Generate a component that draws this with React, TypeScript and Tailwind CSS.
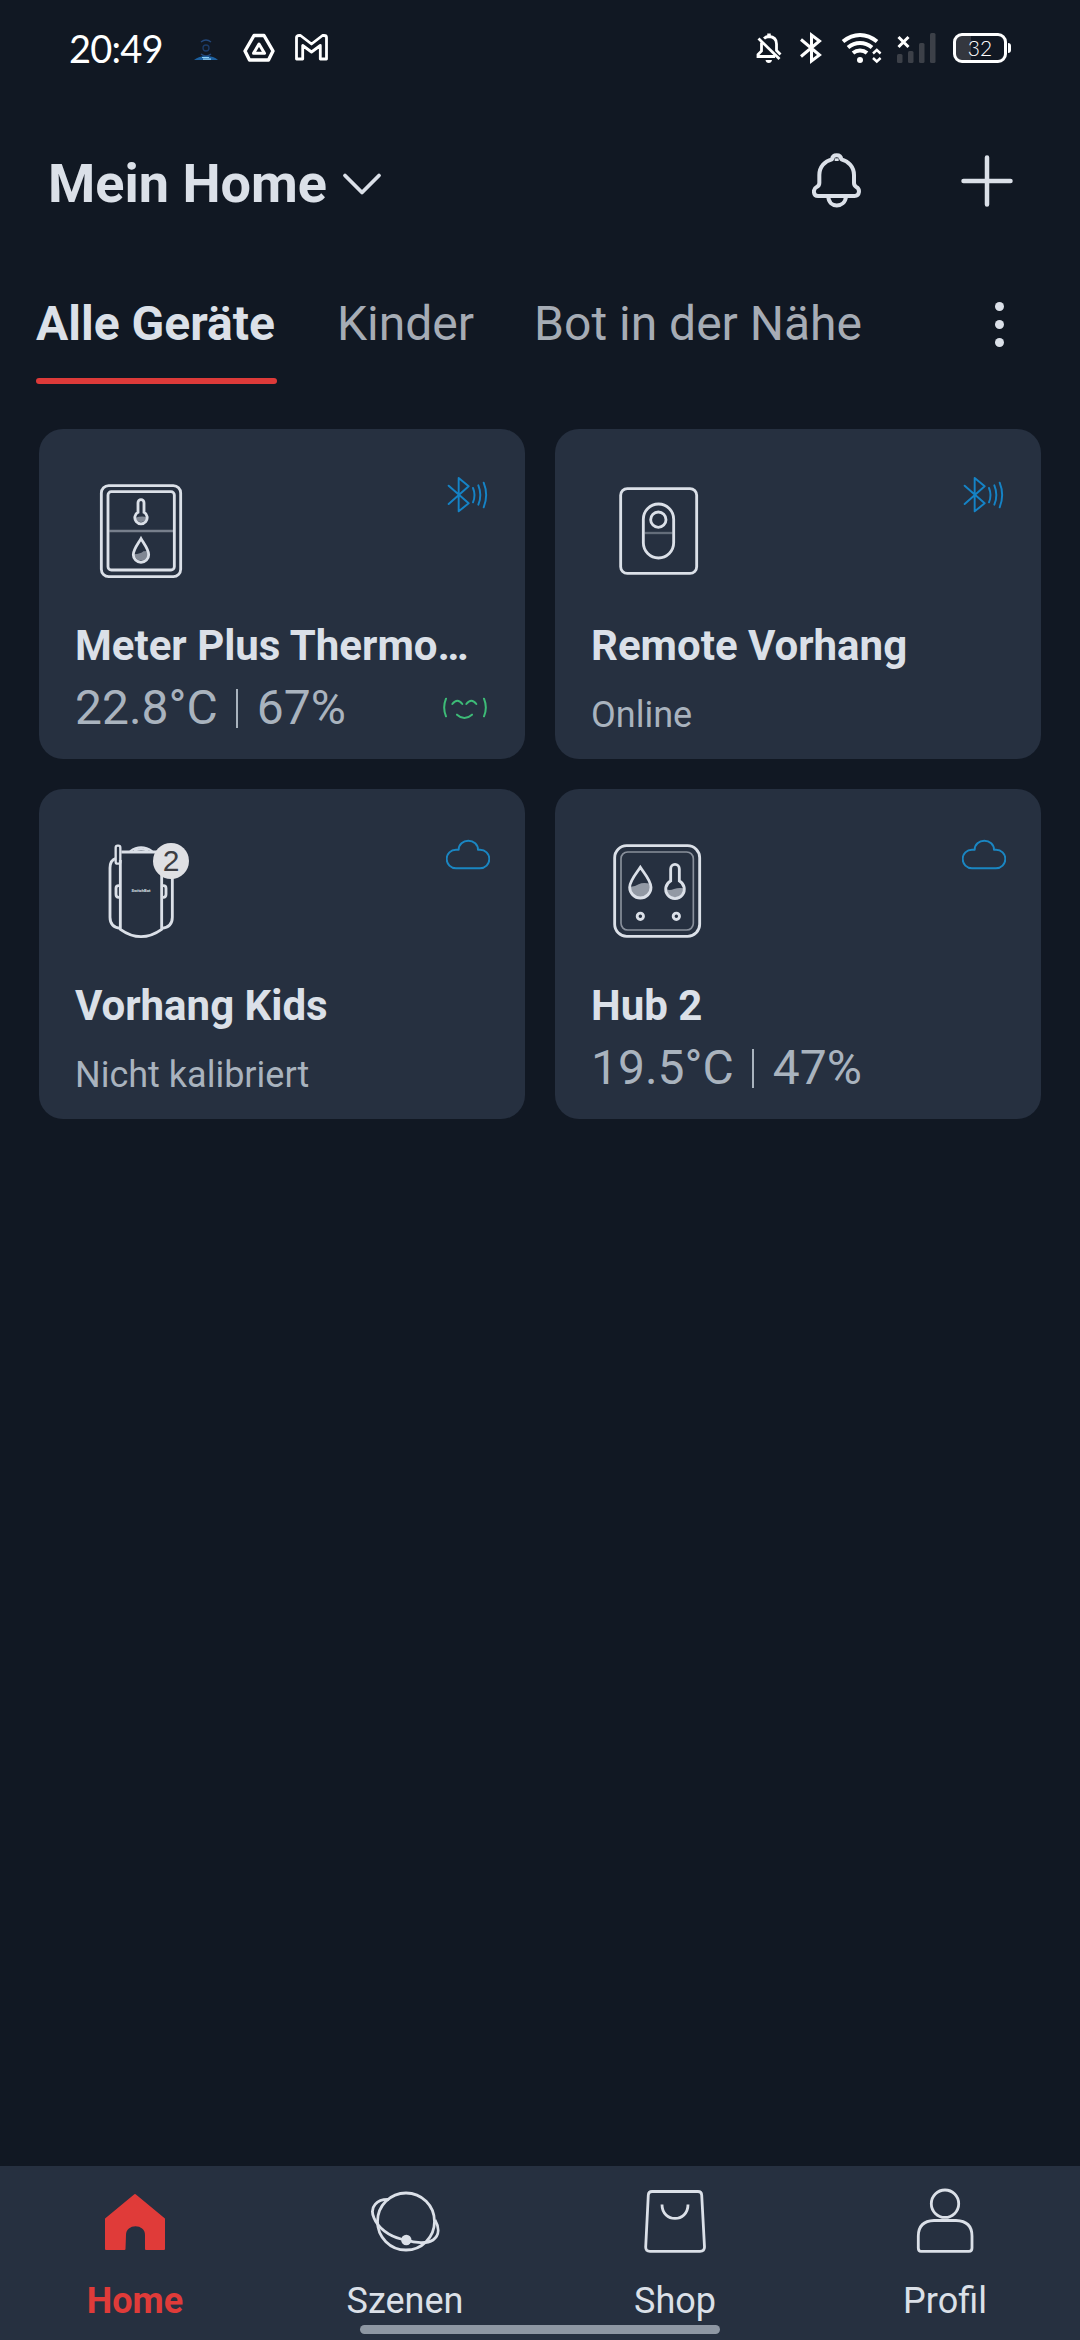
import type { ReactNode } from "react";

type DeviceCardProps = {
  title: string;
  icon: ReactNode;
  connection: ReactNode;
  status?: string;
  reading?: { temperature: string; humidity: string };
  comfort?: boolean;
};

const StatusBar = () => (
  <div className="flex h-24 items-center justify-between pl-[69px] pr-[69px] text-white">
    <div className="flex items-center">
      <span className="w-[124px] font-['Lato',sans-serif] text-[38px] leading-none tracking-[-0.8px]">
        20:49
      </span>
      <svg width="26" height="32" viewBox="0 0 26 32" fill="none" className="mr-6">
        <path d="M8 10 Q13 6 18 10 M8 22 Q13 26 18 22" stroke="#23477a" strokeWidth="1.4" />
        <circle cx="13" cy="16" r="3" stroke="#1c3b68" strokeWidth="1.3" />
        <path d="M1 28 Q6 24 13 24 Q21 24 25 28 Z" fill="#1c5f9e" />
        <path d="M9 25.5 h7 M10 27.2 h8" stroke="#8fd0f5" strokeWidth="1.2" />
      </svg>
      <svg width="32" height="30" viewBox="0 0 32 30" fill="none" stroke="currentColor" strokeLinejoin="round">
        <path d="M11 2.5 H21 L30 18 L25.500 27 H6.500 L2 18 Z" strokeWidth="3.400" />
        <path d="M16 11 L21.500 20.300 H10.500 Z" strokeWidth="3" />
      </svg>
      <svg width="33" height="30" viewBox="0 0 33 30" fill="none" stroke="currentColor" strokeLinejoin="round" className="ml-[20px]">
        <path
          d="M1.500 4.500 Q1.500 2.500 4 2.500 H5.500 L16.500 11 L27.500 2.500 H29 Q31.500 2.500 31.500 4.500 V26 H25.300 V12.500 L16.500 19 L7.700 12.500 V26 H1.500 Z"
          strokeWidth="2.800"
        />
      </svg>
    </div>

    <div className="flex items-center">
      <svg width="26" height="32" viewBox="0 0 26 32" fill="none" stroke="currentColor" strokeWidth="2.800">
        <path d="M5.500 10.500 V19 L2 22.500 V24.500 H19" />
        <path d="M8 6.500 Q10 4.500 13 4.500 Q20.500 5 20.500 12 V18.500 L24.500 22.500" />
        <path d="M13 1.500 V5" strokeWidth="3.500" />
        <path d="M2.500 6.500 L23.500 27" />
        <path d="M9.500 28 H16 Q15.500 31 12.800 31 Q10 31 9.500 28 Z" fill="currentColor" stroke="none" />
      </svg>
      <svg width="24" height="32" viewBox="0 0 24 32" fill="none" stroke="currentColor" strokeWidth="3" className="ml-[17px]">
        <path d="M2 7.500 L20.500 23 L12.500 29 V3 L20.500 9 L2 24.500" />
      </svg>
      <svg width="42" height="32" viewBox="0 0 42 32" fill="none" stroke="currentColor" strokeWidth="4" className="ml-[18px]">
        <path d="M2 9.500 Q10 3 19 3 Q28 3 36 9.500" />
        <path d="M7 15.500 Q12.500 11 19 11 Q25.500 11 31 15.500" />
        <path d="M12 21 Q15 18.500 19 18.500 Q23 18.500 26 21" />
        <circle cx="19" cy="28" r="3" fill="currentColor" stroke="none" />
        <path d="M32 21.500 L35.800 18 L39.600 21.500 M32 26 L35.800 29.500 L39.600 26" strokeWidth="2.400" />
      </svg>
      <svg width="40" height="32" viewBox="0 0 40 32" className="ml-[14px]">
        <g fill="#3c4048">
          <rect x="0" y="22" width="5.500" height="9" rx="1.500" />
          <rect x="11" y="19" width="5.500" height="12" rx="1.500" />
          <rect x="22" y="11" width="5.500" height="20" rx="1.500" />
          <rect x="33" y="1" width="5.500" height="30" rx="1.500" />
        </g>
        <path d="M1.500 5 L11.500 15 M11.500 5 L1.500 15" stroke="currentColor" strokeWidth="3" />
      </svg>
      <div className="ml-4 flex h-[30px] w-[54px] items-center justify-center rounded-[9px] border-3 border-white bg-gradient-to-r from-[#34373f] from-32% to-transparent to-32% pb-0.5 font-['Lato',sans-serif] text-[21px] font-light leading-none">
        32
      </div>
      <div className="ml-px h-[10px] w-[3px] rounded-r bg-white" />
    </div>
  </div>
);

const Header = () => (
  <header className="flex h-[170px] items-center justify-between pl-12 pr-[67px]">
    <div className="flex items-center gap-[15px] pt-1.5">
      <h1 className="text-[54px] font-bold leading-none">Mein Home</h1>
      <svg width="40" height="24" viewBox="0 0 40 24" fill="none" stroke="currentColor" strokeWidth="3.800" strokeLinecap="round" strokeLinejoin="round">
        <path d="M3 3.500 L20 20.500 L37 3.500" />
      </svg>
    </div>
    <div className="flex items-center gap-[100px]">
      <svg width="49" height="55" viewBox="0 0 147 165" fill="none" stroke="currentColor" strokeWidth="12" strokeLinejoin="round" className="mb-0.5">
        <path d="M18 129 C3 129 2 108 14 102 C20 99 22 96 22 90 V66 C22 42 38 24 60 19 C62 3 86 3 88 19 C109 24 126 42 126 66 V90 C126 96 128 99 133 102 C145 108 143 129 128 129 Z" />
        <path d="M74 16 V24" />
        <path d="M49 131 C50 166 98 166 102 131" />
      </svg>
      <svg width="52" height="52" viewBox="0 0 52 52" stroke="currentColor" strokeWidth="4.500" strokeLinecap="round">
        <path d="M26 2.500 V49.500 M2.500 26 H49.500" />
      </svg>
    </div>
  </header>
);

const Tabs = () => (
  <nav className="mt-2.5 flex h-[108px] items-start pl-9 text-5xl leading-[96px]">
    <div className="relative h-full w-[241px] whitespace-nowrap font-bold">
      Alle Geräte
      <span className="absolute inset-x-0 bottom-0 h-1.5 rounded-full bg-[#dd3a39]" />
    </div>
    <span className="ml-[60px] text-[#a6acb5]">Kinder</span>
    <span className="ml-[60px] text-[#a6acb5]">Bot in der Nähe</span>
    <span className="ml-auto mr-[76px] flex h-24 flex-col items-center justify-center gap-[9px]">
      <i className="size-[9px] rounded-full bg-[#dbe0e8]" />
      <i className="size-[9px] rounded-full bg-[#dbe0e8]" />
      <i className="size-[9px] rounded-full bg-[#dbe0e8]" />
    </span>
  </nav>
);

const MeterIcon = () => (
  <svg width="102" height="102" viewBox="0 0 306 306" fill="none" stroke="currentColor" strokeWidth="8.500">
    <rect x="34" y="17" width="238" height="273" rx="22" />
    <rect x="54" y="35" width="199" height="235" rx="10" />
    <path d="M58 153 H249" strokeWidth="7" opacity="0.450" />
    <path d="M136 113 Q153 107 171 111 A18 18 0 0 1 136 113 Z" fill="currentColor" stroke="none" opacity="0.500" />
    <path d="M144 97 V68 A9 9 0 0 1 162 68 V97 A18.500 18.500 0 1 1 144 97 Z" />
    <path d="M131 223 Q153 222 160 214 L176 213 A23 25 0 0 1 131 223 Z" fill="currentColor" stroke="none" opacity="0.500" />
    <path d="M153 176 C145 190 130 208 130 224 A23 23 0 0 0 176 224 C176 208 161 190 153 176 Z" />
  </svg>
);

const RemoteIcon = () => (
  <svg width="102" height="102" viewBox="0 0 306 306" fill="none" stroke="currentColor" strokeWidth="8.500">
    <rect x="44" y="26" width="228" height="254" rx="20" />
    <rect x="112" y="72" width="91" height="162" rx="45.500" />
    <circle cx="157" cy="119" r="23" />
    <path d="M116 159 H199" strokeWidth="7" opacity="0.350" />
  </svg>
);

const CurtainIcon = () => (
  <div className="relative">
    <svg width="102" height="102" viewBox="0 0 306 306" fill="none" stroke="currentColor" strokeWidth="8.500" strokeLinejoin="round">
      <path d="M91 60 V268 Q153 312 215 268 V36 H94" />
      <path d="M78 55 Q60 60 60 84 V232 Q60 262 91 265" />
      <path d="M215 265 Q247 262 247 232 V84" />
      <path d="M120 34 Q153 10 187 34 M132 33 Q153 22 175 33" strokeWidth="6" />
      <rect x="77" y="17" width="14" height="54" rx="6" strokeWidth="7" />
      <path d="M91 137 H86 Q78 137 78 145 V163 Q78 172 86 172 H91 M215 137 H220 Q228 137 228 145 V163 Q228 172 220 172 H215" />
      <text x="153" y="156" textAnchor="middle" fill="currentColor" stroke="none" fontSize="12.500" fontWeight="700">
        SwitchBot
      </text>
    </svg>
    <span className="absolute left-[63px] top-[3px] flex size-9 items-center justify-center rounded-full bg-[#dfe0e4] font-['Liberation_Sans',sans-serif] text-[30px] leading-none text-[#3c3d43]">
      2
    </span>
  </div>
);

const HubIcon = () => (
  <svg width="102" height="102" viewBox="0 0 306 306" fill="none" stroke="currentColor" strokeWidth="8.500">
    <rect x="26" y="17" width="255" height="272" rx="36" />
    <rect x="45" y="36" width="217" height="234" rx="20" strokeWidth="5" opacity="0.550" />
    <path d="M72 140 Q86 141 98 133 Q112 126 134 132 V142 A31 31 0 0 1 72 142 Z" fill="currentColor" stroke="none" opacity="0.600" />
    <path d="M103 82 C92 99 71 122 71 142 A32 32 0 0 0 135 142 C135 122 114 99 103 82 Z" />
    <path d="M180 148 Q192 152 204 147 Q218 142 234 145 A27 27 0 0 1 180 148 Z" fill="currentColor" stroke="none" opacity="0.600" />
    <path d="M194 123 V87 A13 14 0 0 1 220 87 V123 A28 28 0 1 1 194 123 Z" />
    <circle cx="103" cy="229" r="9.500" />
    <circle cx="211" cy="229" r="9.500" />
  </svg>
);

const BluetoothSignal = () => (
  <svg width="44" height="40" viewBox="0 0 132 120" fill="none" stroke="#1583c6" strokeWidth="5.800" strokeLinecap="round" strokeLinejoin="round">
    <path d="M8 32 L68 85 L38 109 V9 L68 34 L8 87" />
    <path d="M81 39 Q90 60 81 82 M97 31 Q109 60 97 89 M113 23 Q128 60 113 97" />
  </svg>
);

const Cloud = () => (
  <svg width="44" height="40" viewBox="0 0 132 120" fill="none" stroke="#1a86c2" strokeWidth="5.800" strokeLinejoin="round">
    <path d="M30 100 A28 28 0 0 1 30 44 L38 44 A29 27 0 0 1 96 44 L102 44 A28 28 0 0 1 102 100 Z" />
  </svg>
);

const ComfortFace = () => (
  <svg width="46" height="24" viewBox="0 0 138 72" fill="none" stroke="#3dbb77" strokeWidth="6" strokeLinecap="round">
    <path d="M12 8 Q1 35 12 61 M126 8 Q137 35 126 61" />
    <path d="M31 24 Q46 4 61 24 M73 24 Q88 4 103 24" />
    <path d="M45 56 Q67 76 90 56" />
  </svg>
);

const DeviceCard = ({ title, icon, connection, status, reading, comfort }: DeviceCardProps) => (
  <article className="h-[330px] rounded-3xl bg-[#263040] pl-9 pr-[35px] pt-[46px]">
    <div className="flex items-start justify-between">
      <div className="ml-[15px] mt-[5px]">{icon}</div>
      {connection}
    </div>
    <h2 className="mt-[37px] whitespace-nowrap text-[42px] font-bold leading-[54px]">{title}</h2>
    {reading ? (
      <div className="mt-[7px] flex h-14 items-center text-5xl text-[#a9b3be]">
        <span>{reading.temperature}</span>
        <i className="ml-[18px] mr-[19px] h-[39px] w-0.5 bg-[#a9b3be]" />
        <span>{reading.humidity}</span>
        {comfort && (
          <span className="ml-auto mr-0.5">
            <ComfortFace />
          </span>
        )}
      </div>
    ) : (
      <p className="mt-5 text-4xl leading-[44px] text-[#a9b3be]">{status}</p>
    )}
  </article>
);

const HomeIcon = () => (
  <svg width="72" height="72" viewBox="0 0 72 72" fill="currentColor" stroke="currentColor" strokeWidth="2" strokeLinejoin="round">
    <path d="M36 10 L65 34 V64 H47 V50 C47 37 26 37 26 50 L25.500 64 H7 V34 Z" />
  </svg>
);

const ScenesIcon = () => (
  <svg width="72" height="72" viewBox="0 0 72 72" fill="none" stroke="currentColor" strokeWidth="2.800">
    <circle cx="37" cy="36.500" r="28.500" />
    <path d="M20 14.500 C8 14 0 22 5 33 C9 43 20 51 32 54 L37 55 C46 58 58 59 64 55 C71 50 70 42 66 35" />
    <circle cx="37.300" cy="55" r="5.200" fill="currentColor" stroke="none" />
  </svg>
);

const ShopIcon = () => (
  <svg width="72" height="72" viewBox="0 0 72 72" fill="none" stroke="currentColor" strokeWidth="2.800">
    <path d="M13 6.500 H59 Q62.500 6.500 62.700 10 L65.500 62 Q65.500 66.300 61 66.300 H11 Q6.500 66.300 6.700 62 L9.300 10 Q9.500 6.500 13 6.500 Z" />
    <path d="M23 19.500 C23 38 49 38 49 19.500" />
  </svg>
);

const ProfileIcon = () => (
  <svg width="72" height="72" viewBox="0 0 72 72" fill="none" stroke="currentColor" strokeWidth="2.800">
    <circle cx="36" cy="18.700" r="13.700" />
    <path d="M25 35.500 H47 Q63 36 63 51 V63 Q63 66.300 60 66.300 H12 Q9.300 66.300 9.300 63 V51 Q9.500 36 25 35.500 Z" />
  </svg>
);

const navItems = [
  { label: "Home", icon: <HomeIcon />, className: "text-[#e03b39] font-bold" },
  { label: "Szenen", icon: <ScenesIcon />, className: "" },
  { label: "Shop", icon: <ShopIcon />, className: "" },
  { label: "Profil", icon: <ProfileIcon />, className: "" },
];

const App = () => {
  return (
    <div className="flex h-[2340px] w-[1080px] flex-col overflow-hidden bg-[#111823] font-['Roboto',sans-serif] text-[#dbe0e8]">
      <StatusBar />
      <Header />
      <Tabs />

      <main className="mx-[39px] mt-[45px] grid grid-cols-2 gap-[30px]">
        <DeviceCard
          title="Meter Plus Thermo…"
          icon={<MeterIcon />}
          connection={<BluetoothSignal />}
          reading={{ temperature: "22.8°C", humidity: "67%" }}
          comfort
        />
        <DeviceCard title="Remote Vorhang" icon={<RemoteIcon />} connection={<BluetoothSignal />} status="Online" />
        <DeviceCard title="Vorhang Kids" icon={<CurtainIcon />} connection={<Cloud />} status="Nicht kalibriert" />
        <DeviceCard
          title="Hub 2"
          icon={<HubIcon />}
          connection={<Cloud />}
          reading={{ temperature: "19.5°C", humidity: "47%" }}
        />
      </main>

      <footer className="relative mt-auto grid h-[174px] grid-cols-4 bg-[#263040] pt-[19px]">
        {navItems.map((item) => (
          <div key={item.label} className={`flex flex-col items-center ${item.className}`}>
            {item.icon}
            <span className="mt-[22px] text-4xl leading-[44px]">{item.label}</span>
          </div>
        ))}
        <span className="absolute bottom-1.5 left-[360px] h-[9px] w-[360px] rounded-full bg-[#8e97a3]" />
      </footer>
    </div>
  );
};

export default App;
